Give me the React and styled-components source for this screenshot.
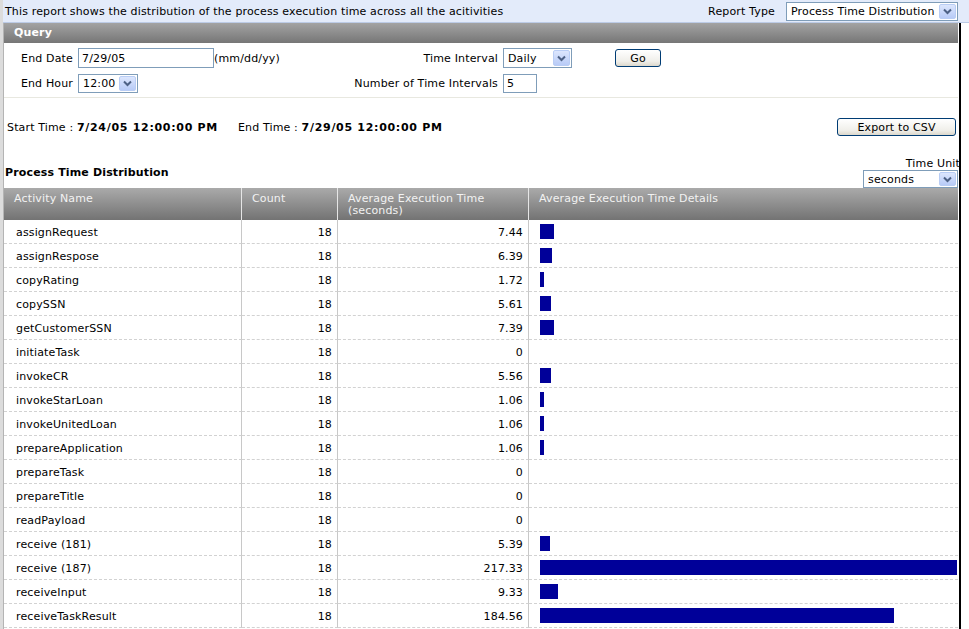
import React from "react";
import styled, { createGlobalStyle } from "styled-components";

const GlobalStyle = createGlobalStyle`
  html, body { margin: 0; padding: 0; overflow: hidden; background: #fff; }
  body { font-family: "DejaVu Sans", Verdana, sans-serif; font-size: 11px; letter-spacing: 0.15px; color: #000; }
  * { box-sizing: border-box; }
`;

const Page = styled.div`
  border-left: 3px solid #dcdcdc;
  min-height: 100vh;
`;

const Banner = styled.div`
  display: flex;
  align-items: center;
  height: 23px;
  border-bottom: 1px solid #bccbe6;
  background: #e3ebfa;
  padding: 0 11px 0 2px;
`;

const BannerText = styled.div`
  flex: 1;
  white-space: nowrap;
`;

const BannerLabel = styled.span`
  margin-right: 11px;
`;

const Content = styled.div`
  width: 958px;
  min-height: calc(100vh - 23px);
  border-left: 1px solid #b4b4b4;
  border-right: 2px solid #000;
  padding-right: 1px;
  overflow: hidden;
`;

const BarHeader = styled.div`
  height: 20px;
  line-height: 20px;
  padding-left: 10px;
  color: #fff;
  font-weight: bold;
  background: linear-gradient(#a3a3a3, #767676);
`;

const QueryForm = styled.div`
  display: grid;
  grid-template-columns: 69px 269px 146px 107px auto;
  grid-template-rows: 20px 20px;
  column-gap: 5px;
  row-gap: 5px;
  align-items: center;
  padding: 5px 0 4px;
  border-bottom: 1px solid #e8e8e0;
`;

const Label = styled.span`
  justify-self: end;
  white-space: nowrap;
`;

const Field = styled.div`
  display: flex;
  align-items: center;
  white-space: nowrap;
`;

const TextInput = styled.div`
  width: ${(p) => p.$w}px;
  height: ${(p) => p.$h || 20}px;
  border: 1px solid #7f9db9;
  background: #fff;
  padding-left: 3px;
  display: flex;
  align-items: center;
`;

const SelectBox = styled.div`
  width: ${(p) => p.$w}px;
  height: ${(p) => p.$h || 19}px;
  border: 1px solid #7f9db9;
  background: #fff;
  display: flex;
  align-items: center;
  padding: 1px;
`;

const SelectValue = styled.span`
  flex: 1;
  padding-left: 3px;
  white-space: nowrap;
  overflow: hidden;
`;

const ArrowBox = styled.span`
  width: 17px;
  height: 100%;
  display: flex;
  align-items: center;
  justify-content: center;
  border: 1px solid #b9cdf5;
  border-radius: 2px;
  background: linear-gradient(#dce6fd, #b8cbf7);
`;

const Button = styled.div`
  width: ${(p) => p.$w}px;
  height: 18px;
  border: 1px solid #003c74;
  border-radius: 3px;
  background: linear-gradient(#ffffff, #f0efea 70%, #dcd8cc);
  display: flex;
  align-items: center;
  justify-content: center;
  justify-self: start;
`;

const InfoBar = styled.div`
  display: flex;
  justify-content: space-between;
  align-items: center;
  margin-top: 20px;
  padding: 0 2px 0 3px;
`;

const Bold = styled.b`
  font-weight: bold;
  letter-spacing: 0.7px;
`;

const Gap = styled.span`
  display: inline-block;
  width: 20px;
`;

const TitleRow = styled.div`
  display: flex;
  justify-content: space-between;
  align-items: flex-end;
  margin-top: 21px;
`;

const Title = styled.div`
  font-weight: bold;
  padding: 0 0 9px 1px;
  line-height: 13px;
`;

const UnitBox = styled.div`
  display: flex;
  flex-direction: column;
  align-items: flex-end;
`;

const UnitLabel = styled.span`
  line-height: 13px;
  margin-right: -2px;
  white-space: nowrap;
`;

const Grid = styled.div`
  display: grid;
  grid-template-columns: 238px 96px 191px 1fr;
`;

const HeadCell = styled.div`
  height: 32px;
  padding: 5px 10px 0;
  line-height: 12px;
  color: #f2f2f2;
  background: linear-gradient(#aaaaaa, #737373);
  border-right: ${(p) => (p.$last ? "none" : "1px solid #e6e6e6")};
`;

const Cell = styled.div`
  height: 24px;
  padding-top: 1px;
  display: flex;
  align-items: center;
  justify-content: ${(p) => (p.$right ? "flex-end" : "flex-start")};
  padding-left: ${(p) => (p.$right ? 0 : p.$bar ? 11 : 12)}px;
  padding-right: ${(p) => (p.$right ? 5 : 0)}px;
  border-bottom: 1px dashed #d2d2d2;
  border-right: ${(p) => (p.$last ? "none" : "1px solid #c8c8c8")};
  overflow: hidden;
  white-space: nowrap;
`;

const Bar = styled.div`
  height: 15px;
  flex: none;
  margin-top: -2px;
  background: #000099;
`;

const Chevron = () => (
  <svg width="9" height="7" viewBox="0 0 9 7">
    <polyline points="1,1.5 4.5,5 8,1.5" fill="none" stroke="#4d6185" strokeWidth="2" />
  </svg>
);

const Select = ({ value, w, h }) => (
  <SelectBox $w={w} $h={h}>
    <SelectValue>{value}</SelectValue>
    <ArrowBox>
      <Chevron />
    </ArrowBox>
  </SelectBox>
);

const rows = [
  ["assignRequest", 18, "7.44"],
  ["assignRespose", 18, "6.39"],
  ["copyRating", 18, "1.72"],
  ["copySSN", 18, "5.61"],
  ["getCustomerSSN", 18, "7.39"],
  ["initiateTask", 18, "0"],
  ["invokeCR", 18, "5.56"],
  ["invokeStarLoan", 18, "1.06"],
  ["invokeUnitedLoan", 18, "1.06"],
  ["prepareApplication", 18, "1.06"],
  ["prepareTask", 18, "0"],
  ["prepareTitle", 18, "0"],
  ["readPayload", 18, "0"],
  ["receive (181)", 18, "5.39"],
  ["receive (187)", 18, "217.33"],
  ["receiveInput", 18, "9.33"],
  ["receiveTaskResult", 18, "184.56"],
];

const SCALE = 1.918;

export default function App() {
  return (
    <>
      <GlobalStyle />
      <Page>
        <Banner>
          <BannerText>
            This report shows the distribution of the process execution time across all the acitivities
          </BannerText>
          <BannerLabel>Report Type</BannerLabel>
          <Select value="Process Time Distribution" w={172} h={19} />
        </Banner>
        <Content>
          <BarHeader>Query</BarHeader>
          <QueryForm>
            <Label>End Date</Label>
            <Field>
              <TextInput $w={136}>7/29/05</TextInput>
              <span>(mm/dd/yy)</span>
            </Field>
            <Label>Time Interval</Label>
            <Field>
              <Select value="Daily" w={69} h={20} />
            </Field>
            <Button $w={46}>Go</Button>
            <Label>End Hour</Label>
            <Field>
              <Select value="12:00" w={60} h={19} />
            </Field>
            <Label>Number of Time Intervals</Label>
            <Field>
              <TextInput $w={34} $h={19}>5</TextInput>
            </Field>
          </QueryForm>
          <InfoBar>
            <span>
              Start Time : <Bold>7/24/05 12:00:00 PM</Bold>
              <Gap />
              End Time : <Bold>7/29/05 12:00:00 PM</Bold>
            </span>
            <Button $w={119}>Export to CSV</Button>
          </InfoBar>
          <TitleRow>
            <Title>Process Time Distribution</Title>
            <UnitBox>
              <UnitLabel>Time Unit</UnitLabel>
              <Select value="seconds" w={95} h={18} />
            </UnitBox>
          </TitleRow>
          <Grid>
            <HeadCell>Activity Name</HeadCell>
            <HeadCell>Count</HeadCell>
            <HeadCell>
              Average Execution Time
              <br />
              (seconds)
            </HeadCell>
            <HeadCell $last>Average Execution Time Details</HeadCell>
            {rows.map(([name, count, avg]) => {
              const v = parseFloat(avg);
              return (
                <React.Fragment key={name}>
                  <Cell>{name}</Cell>
                  <Cell $right>{count}</Cell>
                  <Cell $right>{avg}</Cell>
                  <Cell $bar $last>
                    {v > 0 && <Bar style={{ width: Math.max(4, Math.round(v * SCALE)) }} />}
                  </Cell>
                </React.Fragment>
              );
            })}
          </Grid>
        </Content>
      </Page>
    </>
  );
}
